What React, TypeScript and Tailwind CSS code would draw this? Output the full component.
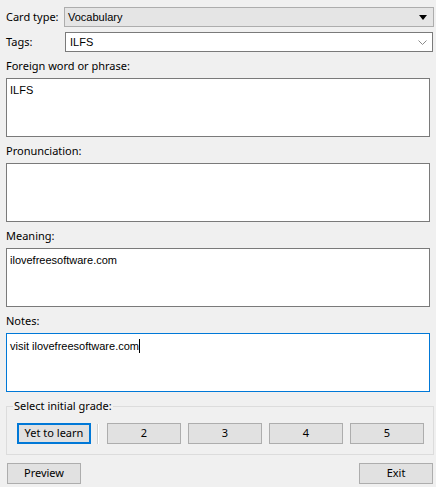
import React from 'react';

const Label = ({ children }: { children: React.ReactNode }) => (
  <div className="mt-[7px] mb-[5px] h-[14px] leading-[14px] pl-[6px] font-['Noto_Sans',sans-serif] text-[11px] text-black">
    {children}
  </div>
);

const TextBox = ({ text, focused, caret }: { text?: string; focused?: boolean; caret?: boolean }) => (
  <div
    className={`mx-[6px] h-[59px] bg-white border px-[3px] pt-[5px] text-[11px] leading-[13px] font-['Liberation_Sans',sans-serif] text-black ${
      focused ? 'border-[#0078d7]' : 'border-[#7a7a7a]'
    }`}
  >
    <span>{text}</span>
    {caret && <span className="inline-block align-[-3px] w-px h-[14px] bg-black" />}
  </div>
);

const Btn = ({ children, active }: { children: React.ReactNode; active?: boolean }) => (
  <button
    className={`w-[74px] h-[21px] bg-[#e1e1e1] text-[11px] font-['Noto_Sans',sans-serif] text-black flex items-center justify-center ${
      active ? 'border-2 border-[#0078d7]' : 'border border-[#adadad]'
    }`}
  >
    {children}
  </button>
);

export default function App() {
  return (
    <div className="w-[436px] h-[487px] bg-[#f0f0f0] flex flex-col overflow-hidden">
      <div className="mt-[7px] flex items-center h-[20px]">
        <div className="w-[64px] pl-[6px] font-['Noto_Sans',sans-serif] text-[11px] text-black">Card type:</div>
        <div className="w-[370px] h-[20px] bg-[#e5e5e5] border border-[#adadad] flex items-center justify-between pl-[3px] pr-[6px] font-['Liberation_Sans',sans-serif] text-[11px] text-black">
          <span>Vocabulary</span>
          <svg width="8" height="5" viewBox="0 0 8 5">
            <path d="M0 0 H8 L4 5 Z" fill="#000" />
          </svg>
        </div>
      </div>
      <div className="mt-[5px] flex items-center h-[20px]">
        <div className="w-[65px] pl-[6px] font-['Noto_Sans',sans-serif] text-[11px] text-black">Tags:</div>
        <div className="w-[368px] h-[20px] bg-white border border-[#7a7a7a] flex items-center justify-between pl-[4px] pr-[5px] font-['Liberation_Sans',sans-serif] text-[11px] text-black">
          <span>ILFS</span>
          <svg width="9" height="5" viewBox="0 0 9 5">
            <path d="M0.5 0.5 L4.5 4.5 L8.5 0.5" fill="none" stroke="#8a8a8a" strokeWidth="1" />
          </svg>
        </div>
      </div>

      <Label>Foreign word or phrase:</Label>
      <TextBox text="ILFS" />
      <Label>Pronunciation:</Label>
      <TextBox />
      <Label>Meaning:</Label>
      <TextBox text="ilovefreesoftware.com" />
      <Label>Notes:</Label>
      <TextBox text="visit ilovefreesoftware.com" focused caret />

      <fieldset className="mt-[7px] ml-[6px] w-[428px] border border-[#dcdcdc] pl-[10px] pr-[9px] pt-[10px] pb-[10px]">
        <legend className="-ml-[4px] px-[1px] h-[14px] leading-[14px] font-['Noto_Sans',sans-serif] text-[11px] text-black">
          Select initial grade:
        </legend>
        <div className="flex items-center">
          <Btn active>Yet to learn</Btn>
          <div className="ml-[6px] mr-[8px] w-[2px] h-[20px] border-l border-[#d0d0d0] bg-white" />
          <div className="flex gap-[7px]">
            <Btn>2</Btn>
            <Btn>3</Btn>
            <Btn>4</Btn>
            <Btn>5</Btn>
          </div>
        </div>
      </fieldset>

      <div className="mt-[8px] pl-[7px] pr-[3px] flex justify-between">
        <Btn>Preview</Btn>
        <Btn>Exit</Btn>
      </div>
    </div>
  );
}
